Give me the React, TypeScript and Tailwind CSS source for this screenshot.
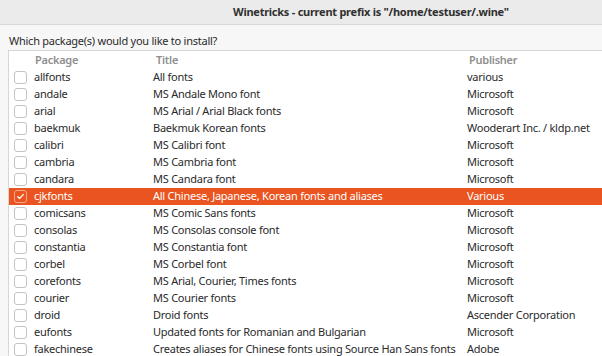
import React from "react";

const rows: [string, string, string][] = [
  ["allfonts", "All fonts", "various"],
  ["andale", "MS Andale Mono font", "Microsoft"],
  ["arial", "MS Arial / Arial Black fonts", "Microsoft"],
  ["baekmuk", "Baekmuk Korean fonts", "Wooderart Inc. / kldp.net"],
  ["calibri", "MS Calibri font", "Microsoft"],
  ["cambria", "MS Cambria font", "Microsoft"],
  ["candara", "MS Candara font", "Microsoft"],
  ["cjkfonts", "All Chinese, Japanese, Korean fonts and aliases", "Various"],
  ["comicsans", "MS Comic Sans fonts", "Microsoft"],
  ["consolas", "MS Consolas console font", "Microsoft"],
  ["constantia", "MS Constantia font", "Microsoft"],
  ["corbel", "MS Corbel font", "Microsoft"],
  ["corefonts", "MS Arial, Courier, Times fonts", "Microsoft"],
  ["courier", "MS Courier fonts", "Microsoft"],
  ["droid", "Droid fonts", "Ascender Corporation"],
  ["eufonts", "Updated fonts for Romanian and Bulgarian", "Microsoft"],
  ["fakechinese", "Creates aliases for Chinese fonts using Source Han Sans fonts", "Adobe"],
];

function Check({ on }: { on: boolean }) {
  if (on) {
    return (
      <span className="ml-[5px] flex h-[13px] w-[13px] shrink-0 items-center justify-center rounded-[3px] border border-[#f5a98c] bg-[#e95420]">
        <svg width="9" height="9" viewBox="0 0 9 9">
          <path d="M1.8 4.7 L3.7 6.4 L7.2 2.6" fill="none" stroke="#ffffff" strokeWidth="1.4" strokeLinecap="round" strokeLinejoin="round" />
        </svg>
      </span>
    );
  }
  return <span className="ml-[5px] h-[13px] w-[13px] shrink-0 rounded-[3px] border border-[#c4c4c4] bg-white" />;
}

export default function App() {
  return (
    <div
      className="h-[356px] w-[602px] overflow-hidden bg-[#f7f7f7] text-[11px] tracking-[-0.25px] text-[#2a2a2a]"
      style={{ fontFamily: '"Noto Sans", "Open Sans", sans-serif' }}
    >
      <div className="flex h-[25px] items-center border-b border-[#d8d8d8] bg-[#ebebeb] pl-[233px] text-[11px] font-bold text-[#303030]">
        Winetricks - current prefix is "/home/testuser/.wine"
      </div>
      <div className="flex h-[25px] items-center pl-[9px] pt-[7px]">Which package(s) would you like to install?</div>
      <div className="ml-[8px] h-[310px] border-l border-t border-[#d6d6d6] bg-white">
        <div className="flex h-[18px] items-center font-semibold text-[#8e8e8e]">
          <span className="w-[26px] shrink-0" />
          <span className="w-[120px] shrink-0">Package</span>
          <span className="w-[313px] shrink-0 pl-[1px]">Title</span>
          <span className="pl-[1px]">Publisher</span>
        </div>
        {rows.map(([p, t, pub]) => {
          const sel = p === "cjkfonts";
          return (
            <div
              key={p}
              className={
                "flex h-[17px] items-center whitespace-nowrap " + (sel ? "bg-[#e95420] text-white" : "")
              }
            >
              <Check on={sel} />
              <span className="w-[126px] shrink-0 pl-[7px]">{p}</span>
              <span className="w-[314px] shrink-0">{t}</span>
              <span>{pub}</span>
            </div>
          );
        })}
      </div>
    </div>
  );
}
